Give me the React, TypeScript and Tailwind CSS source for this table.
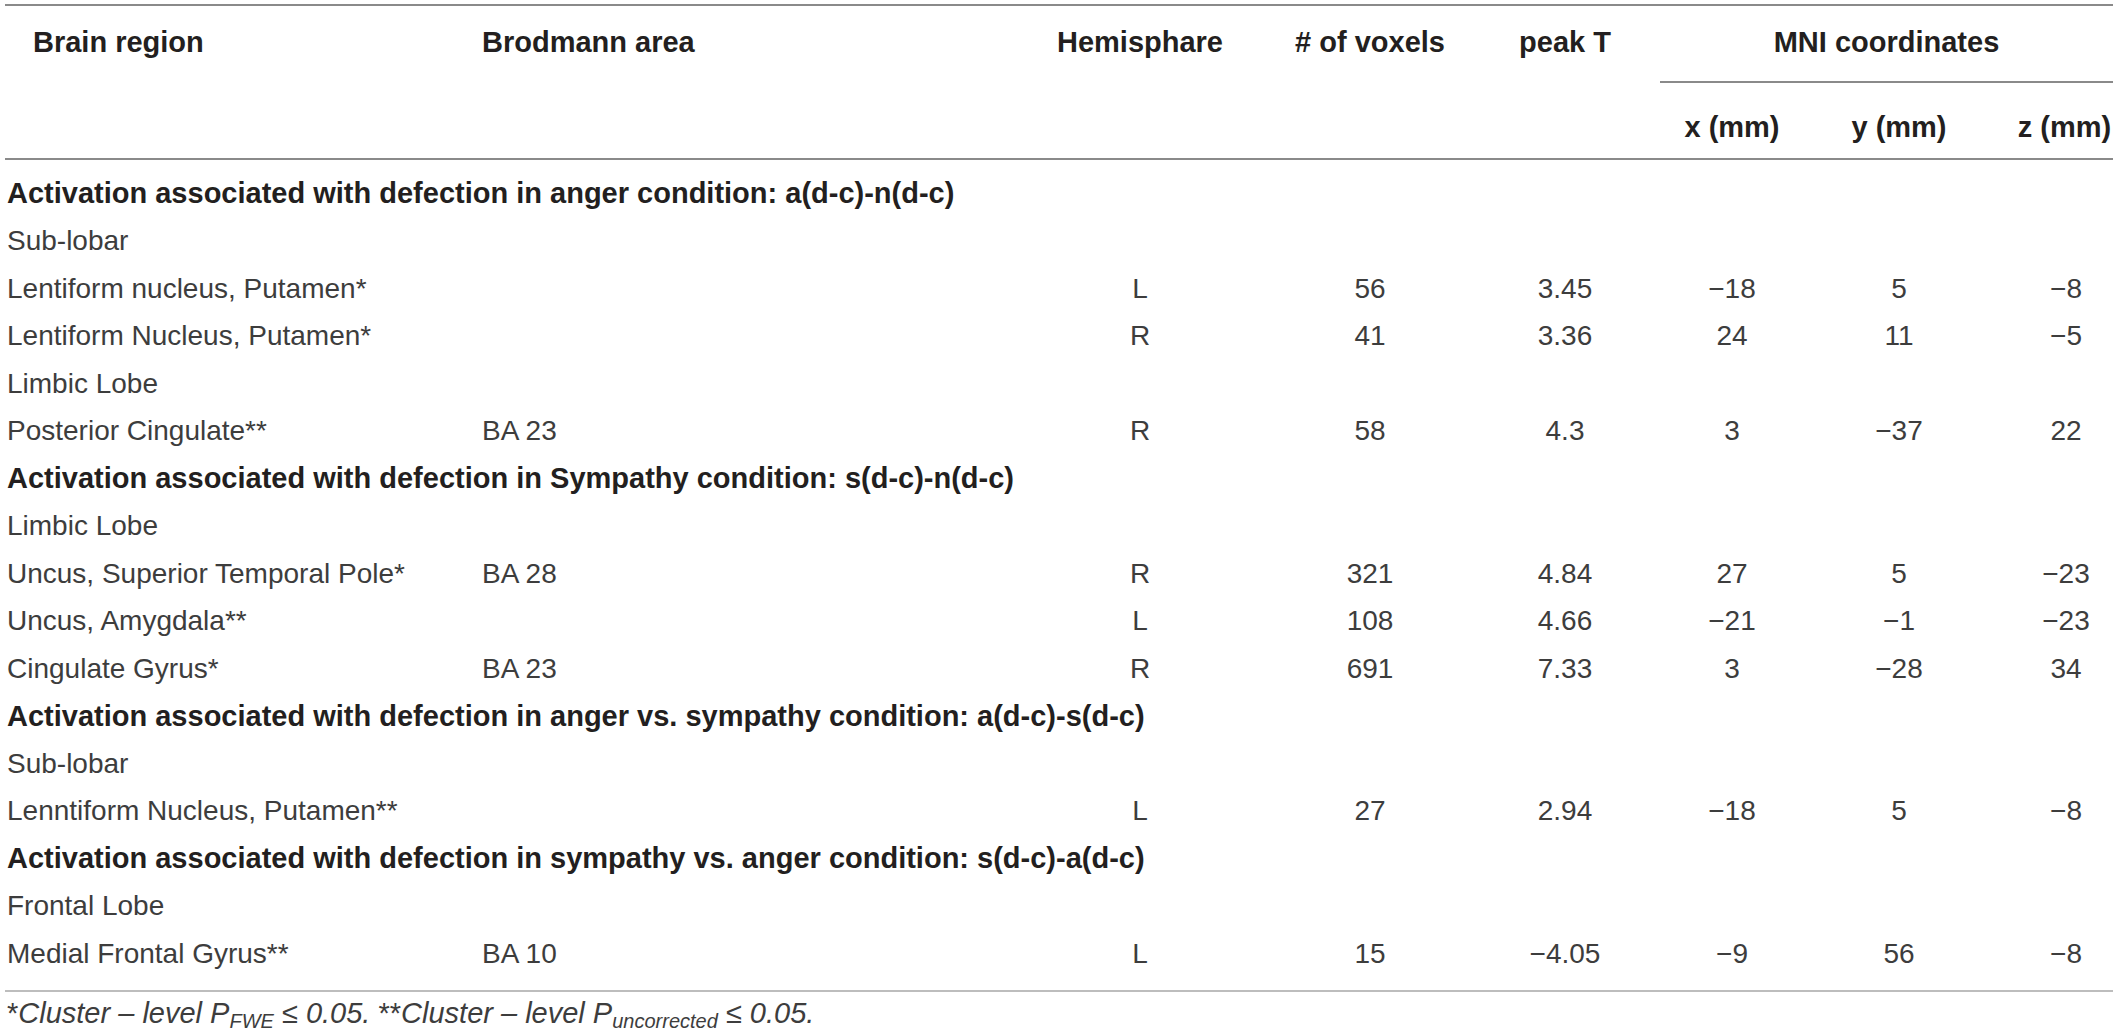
import React, { FC } from "react"

type Row =
  | { kind: "heading"; label: string }
  | { kind: "group"; label: string }
  | { kind: "data"; cells: string[] }

const rows: Row[] = [
  { kind: "heading", label: "Activation associated with defection in anger condition: a(d-c)-n(d-c)" },
  { kind: "group", label: "Sub-lobar" },
  { kind: "data", cells: ["Lentiform nucleus, Putamen*", "", "L", "56", "3.45", "\u221218", "5", "\u22128"] },
  { kind: "data", cells: ["Lentiform Nucleus, Putamen*", "", "R", "41", "3.36", "24", "11", "\u22125"] },
  { kind: "group", label: "Limbic Lobe" },
  { kind: "data", cells: ["Posterior Cingulate**", "BA 23", "R", "58", "4.3", "3", "\u221237", "22"] },
  { kind: "heading", label: "Activation associated with defection in Sympathy condition: s(d-c)-n(d-c)" },
  { kind: "group", label: "Limbic Lobe" },
  { kind: "data", cells: ["Uncus, Superior Temporal Pole*", "BA 28", "R", "321", "4.84", "27", "5", "\u221223"] },
  { kind: "data", cells: ["Uncus, Amygdala**", "", "L", "108", "4.66", "\u221221", "\u22121", "\u221223"] },
  { kind: "data", cells: ["Cingulate Gyrus*", "BA 23", "R", "691", "7.33", "3", "\u221228", "34"] },
  { kind: "heading", label: "Activation associated with defection in anger vs. sympathy condition: a(d-c)-s(d-c)" },
  { kind: "group", label: "Sub-lobar" },
  { kind: "data", cells: ["Lenntiform Nucleus, Putamen**", "", "L", "27", "2.94", "\u221218", "5", "\u22128"] },
  { kind: "heading", label: "Activation associated with defection in sympathy vs. anger condition: s(d-c)-a(d-c)" },
  { kind: "group", label: "Frontal Lobe" },
  { kind: "data", cells: ["Medial Frontal Gyrus**", "BA 10", "L", "15", "\u22124.05", "\u22129", "56", "\u22128"] },
]

// column tracks: region | brodmann | hemisphere | voxels | peak T | x | y | z
const cols = "grid grid-cols-[465px_570px_200px_260px_160px_144px_190px_119px]"

// per column alignment so the centres sit where the printed table has them
const cellClass = [
  "pl-[2px] text-left",
  "pl-[12px] text-left",
  "text-center",
  "text-center",
  "pr-[30px] text-center",
  "text-center",
  "text-center",
  "pl-[25px] text-center",
]

const TableHeader: FC = () => (
  <div className={`${cols} grid-rows-[77px_75px] text-[29px] font-bold text-[#231f20]`}>
    <div className="row-span-2 pl-[28px] pt-[18px] leading-[36px]">Brain region</div>
    <div className="row-span-2 pl-[12px] pt-[18px] leading-[36px]">Brodmann area</div>
    <div className="row-span-2 pt-[18px] text-center leading-[36px]">Hemisphare</div>
    <div className="row-span-2 pt-[18px] text-center leading-[36px]"># of voxels</div>
    <div className="row-span-2 pr-[30px] pt-[18px] text-center leading-[36px]">peak T</div>
    <div className="col-span-3 border-b-2 border-[#8a8a8a] pt-[18px] text-center leading-[36px]">MNI coordinates</div>
    <div className="col-start-6 row-start-2 pt-[26px] text-center leading-[36px]">x (mm)</div>
    <div className="col-start-7 row-start-2 pt-[26px] text-center leading-[36px]">y (mm)</div>
    <div className="col-start-8 row-start-2 pl-[22px] pt-[26px] text-center leading-[36px]">z (mm)</div>
  </div>
)

const TableRow: FC<{ row: Row }> = ({ row }) => {
  if (row.kind === "heading")
    return (
      <div className="flex h-[47.5px] items-center whitespace-nowrap pl-[2px] text-[29px] font-bold text-[#231f20]">
        {row.label}
      </div>
    )
  if (row.kind === "group")
    return <div className="flex h-[47.5px] items-center pl-[2px] text-[#3d3d3d]">{row.label}</div>
  return (
    <div className={`${cols} h-[47.5px] items-center text-[#3d3d3d]`}>
      {row.cells.map((cell, i) => (
        <div key={i} className={`${cellClass[i]} whitespace-nowrap`}>
          {cell}
        </div>
      ))}
    </div>
  )
}

export default function App() {
  return (
    <div className="min-h-screen bg-white">
      <div className="ml-[5px] w-[2108px] pt-[4px] font-['Liberation_Sans',Arial,sans-serif] text-[28px]">
        <div className="h-[2px] bg-[#8a8a8a]" />
        <TableHeader />
        <div className="h-[2px] bg-[#8a8a8a]" />
        <div className="pb-[12px] pt-[10px]">
          {rows.map((row, i) => (
            <TableRow row={row} key={i} />
          ))}
        </div>
        <div className="h-[2px] bg-[#bdbdbd]" />
        <p className="mt-[3px] whitespace-nowrap pl-[2px] text-[29px] leading-[36px] text-[#3d3d3d] italic">
          <span className="not-italic">*</span>Cluster – level P<sub className="text-[20px]">FWE</sub> ≤ 0.05.{" "}
          <span className="not-italic">**</span>Cluster – level P<sub className="text-[20px]">uncorrected</sub> ≤ 0.05.
        </p>
      </div>
    </div>
  )
}
